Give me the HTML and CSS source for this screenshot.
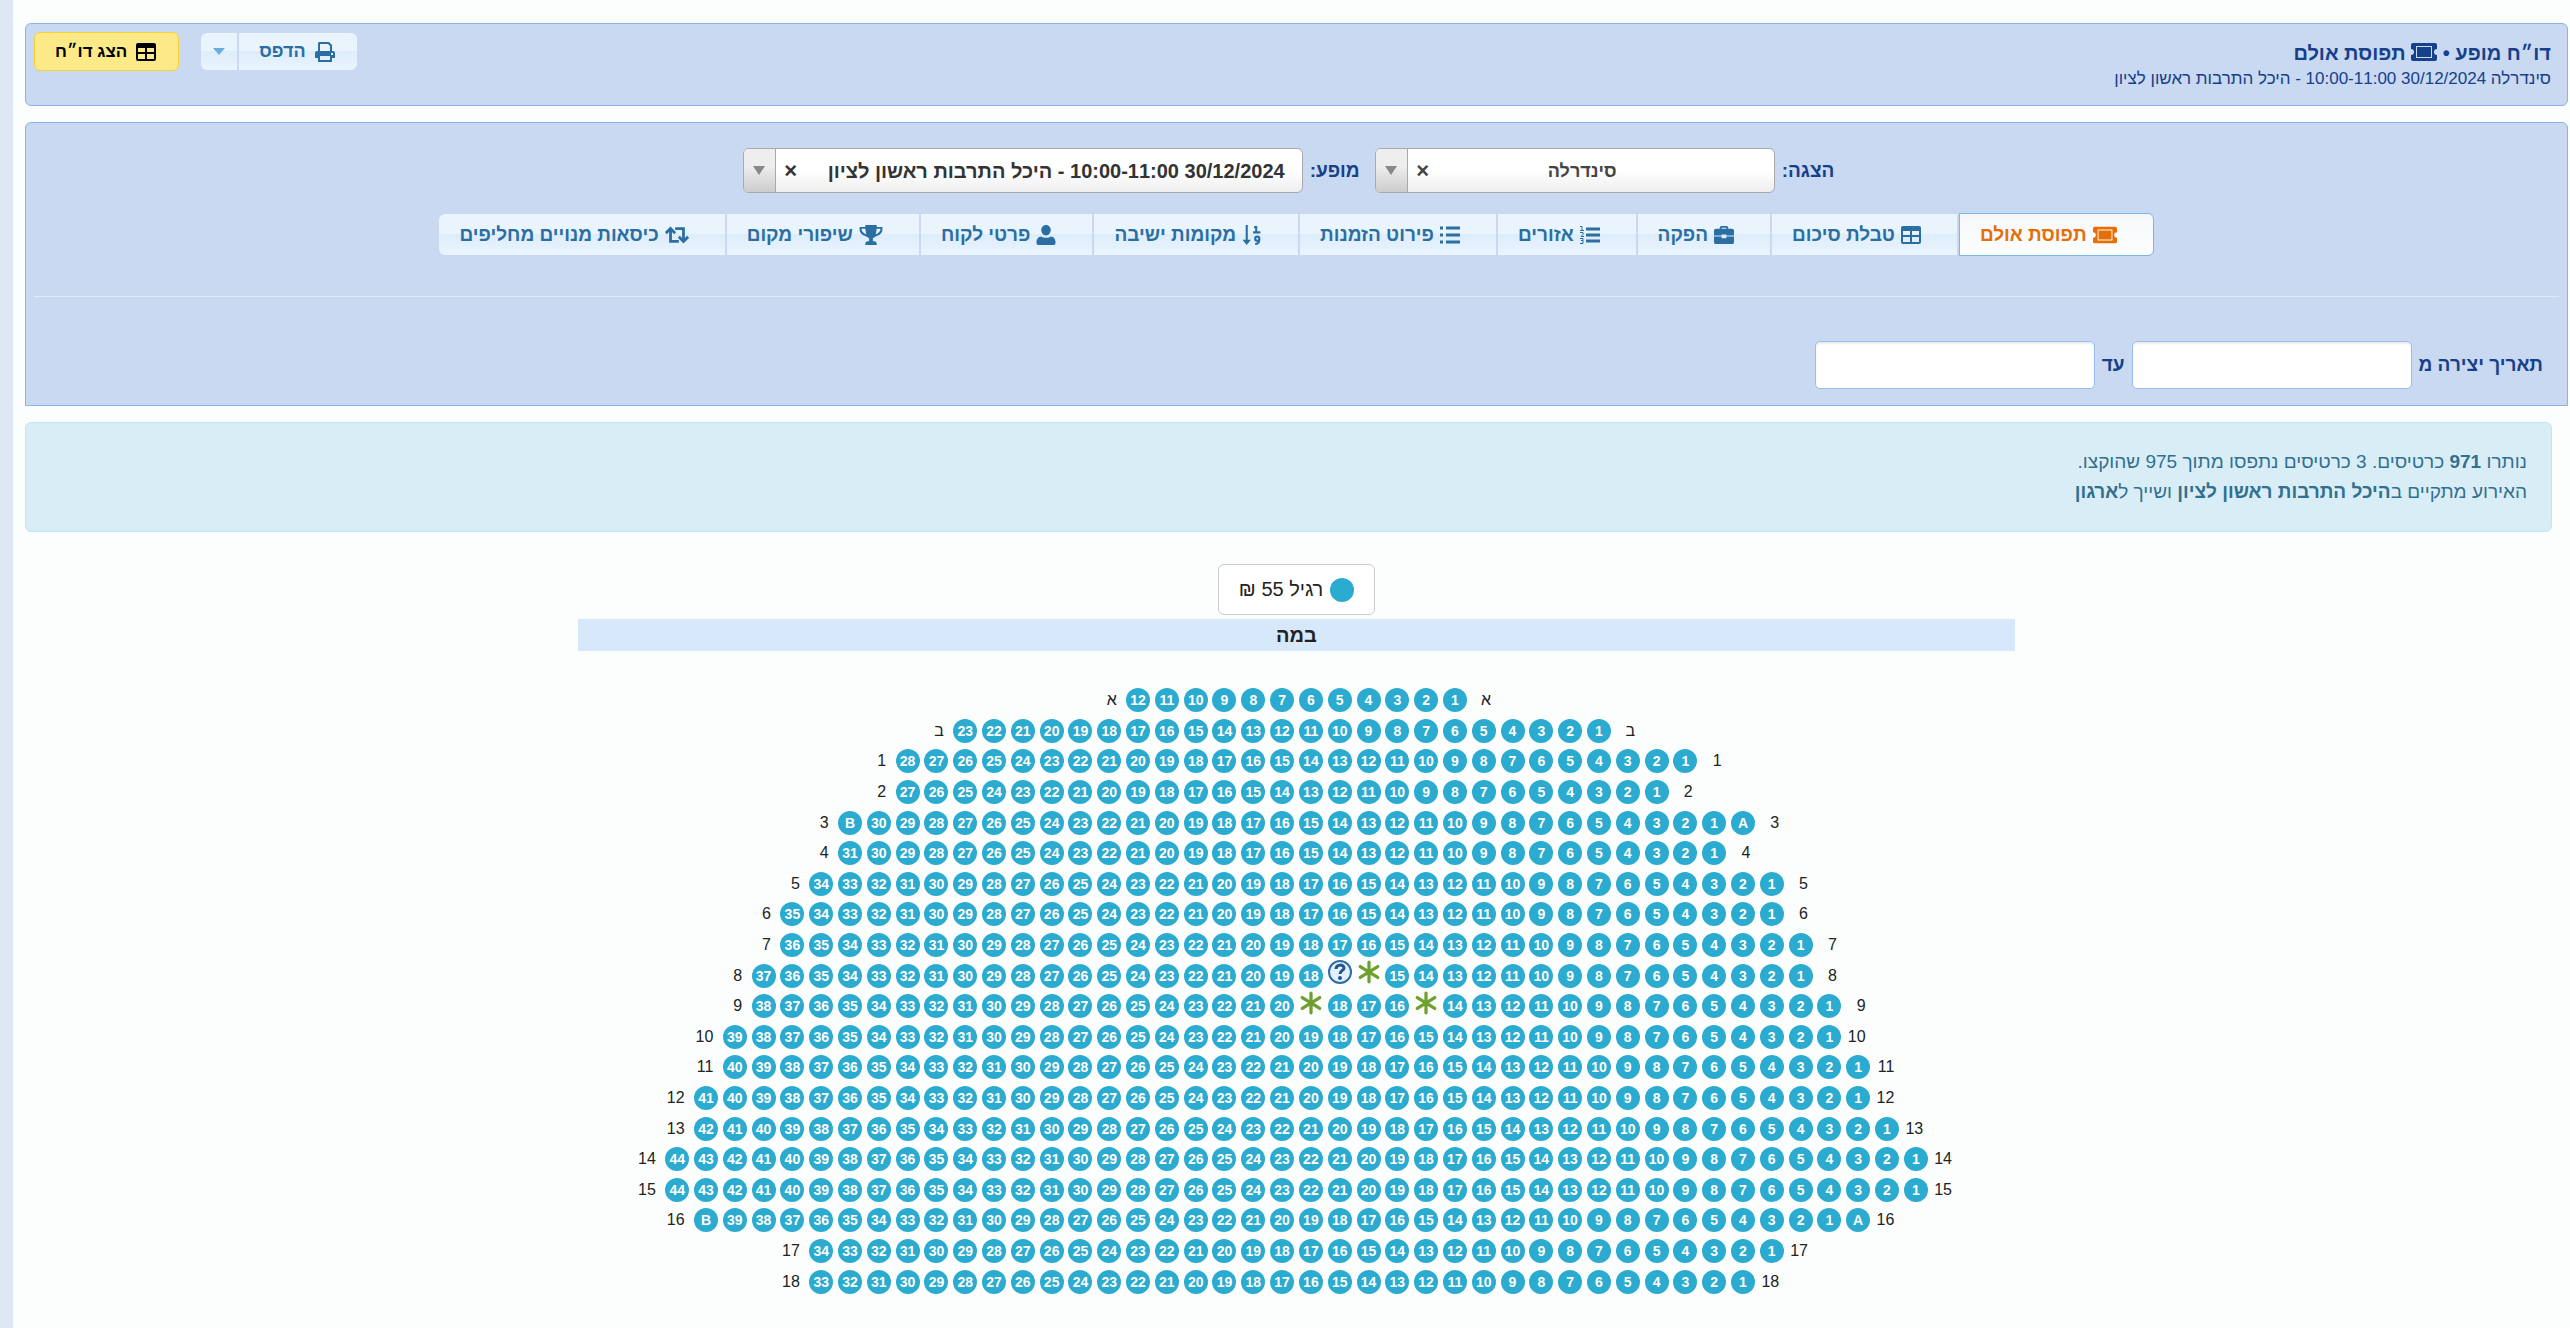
FILE: index.html
```html
<!DOCTYPE html>
<html lang="he" dir="rtl">
<head>
    <meta charset="UTF-8">
    <meta name="viewport" content="width=device-width, initial-scale=1.0">
    <title>דו״ח מופע • תפוסת אולם</title>
    <link rel="stylesheet" href="styles.css">
</head>
<body>
    <!-- Icon sprite -->
    <svg class="sprite" aria-hidden="true">
        <symbol id="i-ticket" viewBox="0 0 26 18">
            <path fill="currentColor" fill-rule="evenodd" d="M2 0h22a2 2 0 0 1 2 2v4a3 3 0 0 0 0 6v4a2 2 0 0 1-2 2H2a2 2 0 0 1-2-2v-4a3 3 0 0 0 0-6V2a2 2 0 0 1 2-2zM5 3v12h16V3zM6 4h14v10H6z"/>
        </symbol>
        <symbol id="i-table" viewBox="0 0 20 18">
            <path fill="currentColor" fill-rule="evenodd" d="M2 0h16a2 2 0 0 1 2 2v14a2 2 0 0 1-2 2H2a2 2 0 0 1-2-2V2a2 2 0 0 1 2-2zM2 5h7v4H2zM11 5h7v4h-7zM2 11h7v5H2zM11 11h7v5h-7z"/>
        </symbol>
        <symbol id="i-print" viewBox="0 0 20 20">
            <path fill="currentColor" fill-rule="evenodd" d="M4 0h10l3 3v6h1a2 2 0 0 1 2 2v5h-3v4H3v-4H0v-5a2 2 0 0 1 2-2h1V1zM5 2v7h10V4l-2-2zM5 14v4h10v-4zM16 11v2h2v-2z"/>
        </symbol>
        <symbol id="i-case" viewBox="0 0 21 19">
            <path fill="currentColor" fill-rule="evenodd" d="M6 3V2a2 2 0 0 1 2-2h5a2 2 0 0 1 2 2v1h4a2 2 0 0 1 2 2v5h-8V9H8v1H0V5a2 2 0 0 1 2-2zM8 3h5V2H8zM0 11h8v2h5v-2h8v6a2 2 0 0 1-2 2H2a2 2 0 0 1-2-2z"/>
        </symbol>
        <symbol id="i-list" viewBox="0 0 20 17">
            <path fill="currentColor" d="M0 0h3v3H0zM6 0h14v3H6zM0 7h3v3H0zM6 7h14v3H6zM0 14h3v3H0zM6 14h14v3H6z"/>
        </symbol>
        <symbol id="i-listnum" viewBox="0 0 20 19">
            <path fill="currentColor" d="M6 2h14v3H6zM6 8h14v3H6zM6 14h14v3H6z"/>
            <path fill="none" stroke="currentColor" d="M0 1h2v4M0 5h4M0 7h3v2L1 11h3M0 13h3v5H0M1 15h2"/>
        </symbol>
        <symbol id="i-sort" viewBox="0 0 18 19">
            <path fill="currentColor" d="M3 0h2v14h3l-4 5-4-5h3z"/>
            <path fill="none" stroke="currentColor" stroke-width="2" d="M11 2h2v5M10 7h7M14 11a2 2 0 1 0 0 4 2 2 0 1 0 0-4M16 13c0 3-1 5-4 5"/>
        </symbol>
        <symbol id="i-user" viewBox="0 0 20 21">
            <path fill="currentColor" d="M10 0a5 5 0 0 1 5 5c0 3-2 6-5 6S5 8 5 5a5 5 0 0 1 5-5zM5 12c3 2 7 2 10 0 3 0 5 3 5 6v1a2 2 0 0 1-2 2H2a2 2 0 0 1-2-2v-1c0-3 2-6 5-6z"/>
        </symbol>
        <symbol id="i-trophy" viewBox="0 0 24 21">
            <path fill="currentColor" fill-rule="evenodd" d="M6 0h12v2h6v3c0 4-4 6-7 7l-3 2v3h2a3 3 0 0 1 2 3v1H6v-1a3 3 0 0 1 2-3h2v-3l-3-2C4 11 0 9 0 5V2h6zM2 4c0 3 2 4 5 6L6 4zM22 4h-4l-1 6c3-2 5-3 5-6z"/>
        </symbol>
        <symbol id="i-retweet" viewBox="0 0 26 20">
            <path fill="none" stroke="currentColor" stroke-width="3" d="M15 17H6V4M11 3h9v13"/>
            <path fill="none" stroke="currentColor" stroke-width="3" d="M1 8l5-5 5 5M15 12l5 5 5-5"/>
        </symbol>
        <symbol id="i-star" viewBox="0 0 20 22">
            <path fill="none" stroke="#6fa02f" stroke-width="3" stroke-linecap="round" d="M10 2v18M2 6l16 10M18 6L2 16"/>
        </symbol>
        <symbol id="i-help" viewBox="0 0 24 24">
            <circle cx="12" cy="12" r="11" fill="#e3f0fc" stroke="#2f6ba6" stroke-width="2"/>
            <path fill="none" stroke="#22568f" stroke-width="3" d="M8 9c0-5 8-5 8-1 0 3-4 2-4 6"/>
            <circle cx="12" cy="18" r="2" fill="#22568f"/>
        </symbol>
    </svg>

    <header class="panel page-head">
        <div class="titles">
            <h1>דו״ח מופע • <svg class="icon-title"><use href="#i-ticket"/></svg> תפוסת אולם</h1>
            <p>סינדרלה 30/12/2024 10:00-11:00 - היכל התרבות ראשון לציון</p>
        </div>
        <div class="actions">
            <div class="btn-group">
                <button type="button" class="btn btn-print"><svg class="icon"><use href="#i-print"/></svg>הדפס</button>
                <button type="button" class="btn btn-caret" aria-label="אפשרויות הדפסה"><span class="caret"></span></button>
            </div>
            <button type="button" class="btn-show"><svg class="icon"><use href="#i-table"/></svg>הצג דו״ח</button>
        </div>
    </header>

    <section class="panel filters">
        <div class="pickers">
            <label for="show">הצגה:</label>
            <div class="combo combo-show">
                <select id="show"><option>סינדרלה</option></select>
                <button type="button" class="clear" aria-label="נקה">×</button>
                <span class="combo-arrow"><span class="caret"></span></span>
            </div>
            <label class="label-event" for="event">מופע:</label>
            <div class="combo combo-event">
                <select id="event"><option>30/12/2024 10:00-11:00 - היכל התרבות ראשון לציון</option></select>
                <button type="button" class="clear" aria-label="נקה">×</button>
                <span class="combo-arrow"><span class="caret"></span></span>
            </div>
        </div>

        <nav class="tabs">
            <a href="#" class="active"><svg class="icon-wide"><use href="#i-ticket"/></svg>תפוסת אולם</a>
            <a href="#"><svg class="icon"><use href="#i-table"/></svg>טבלת סיכום</a>
            <a href="#"><svg class="icon"><use href="#i-case"/></svg>הפקה</a>
            <a href="#"><svg class="icon"><use href="#i-listnum"/></svg>אזורים</a>
            <a href="#"><svg class="icon"><use href="#i-list"/></svg>פירוט הזמנות</a>
            <a href="#"><svg class="icon"><use href="#i-sort"/></svg>מקומות ישיבה</a>
            <a href="#"><svg class="icon"><use href="#i-user"/></svg>פרטי לקוח</a>
            <a href="#"><svg class="icon-wide"><use href="#i-trophy"/></svg>שיפורי מקום</a>
            <a href="#"><svg class="icon-wide"><use href="#i-retweet"/></svg>כיסאות מנויים מחליפים</a>
        </nav>

        <hr>

        <div class="dates">
            <label for="from">תאריך יצירה מ</label>
            <input type="text" id="from">
            <label for="to">עד</label>
            <input type="text" id="to">
        </div>
    </section>

    <div class="alert">
        <p>נותרו <strong>971</strong> כרטיסים. 3 כרטיסים נתפסו מתוך 975 שהוקצו.</p>
        <p>האירוע מתקיים ב<strong>היכל התרבות ראשון לציון</strong> ושייך ל<strong>ארגון</strong></p>
    </div>

    <main class="hall">
        <div class="legend"><span class="dot"></span>רגיל 55 ₪</div>
        <h2 class="stage">במה</h2>
        <div class="seats" id="seats" dir="ltr"></div>
    </main>

    <script src="script.js"></script>
</body>
</html>
```
FILE: styles.css
```css
* {
    margin: 0;
    padding: 0;
    box-sizing: border-box;
}

body {
    font-family: "Liberation Sans", Arial, sans-serif;
    font-size: 20px;
    background: #fcfefe;
    color: #222;
    min-height: 100vh;
    border-left: 13px solid #dfe7f7;
    padding: 23px 2px 20px 12px;
}

button,
input,
select {
    font: inherit;
    color: inherit;
}

.sprite {
    display: none;
}

.icon {
    width: 20px;
    height: 20px;
    flex: none;
}

.icon-wide {
    width: 24px;
    height: 20px;
    flex: none;
}

.panel {
    background: #c8d9f1;
    border: 1px solid #8fb1e4;
    border-radius: 6px;
    color: #17408b;
    margin-bottom: 16px;
}

/* Header */
.page-head {
    display: flex;
    justify-content: space-between;
    align-items: flex-start;
    min-height: 83px;
    padding: 8px 16px 8px 8px;
}

.titles {
    padding-top: 8px;
}

.titles h1 {
    font-size: 20px;
    line-height: 26px;
}

.titles p {
    font-size: 17px;
    line-height: 26px;
}

.icon-title {
    width: 26px;
    height: 18px;
    vertical-align: -1px;
}

.actions {
    display: flex;
    align-items: center;
    gap: 22px;
}

.btn-group {
    display: flex;
    gap: 2px;
}

.btn,
.btn-show {
    display: flex;
    align-items: center;
    gap: 9px;
    font-weight: bold;
    cursor: pointer;
}

.btn {
    height: 37px;
    border: none;
    font-size: 18px;
    color: #2a6ea3;
    background: linear-gradient(#eaf4fd 50%, #ddedfb 50%, #eaf5fe);
}

.btn-print {
    padding: 0 22px 0 20px;
    border-radius: 0 6px 6px 0;
}

.btn-caret {
    padding: 0 12px;
    border-radius: 6px 0 0 6px;
}

.btn-show {
    height: 39px;
    padding: 0 22px 0 20px;
    border: 1px solid #f8cf3a;
    border-radius: 6px;
    font-size: 17px;
    background: #fcea88;
    color: #000;
}

.caret {
    border: 6px solid transparent;
    border-top: 7px solid #6aaddd;
    border-bottom: none;
}

/* Filters */
.filters {
    border-radius: 6px 6px 0 0;
    padding: 25px 8px 16px;
}

.pickers {
    display: flex;
    justify-content: center;
    align-items: center;
    gap: 7px;
    padding-right: 16px;
    margin-bottom: 20px;
}

.pickers label,
.dates label {
    font-size: 19px;
    font-weight: bold;
}

.label-event {
    margin-right: 8px;
}

.combo {
    position: relative;
    display: flex;
    height: 45px;
    border: 1px solid #aaa;
    border-radius: 6px;
    background: linear-gradient(#fff 50%, #eee);
    color: #444;
    overflow: hidden;
}

.combo select {
    flex: 1;
    min-width: 0;
    appearance: none;
    border: none;
    background: none;
    font-size: 18px;
    font-weight: bold;
    padding: 0 17px 0 0;
}

.combo-show {
    width: 400px;
}

.combo-show select {
    text-align-last: center;
}

.combo-event {
    width: 560px;
    color: #333;
}

.combo-event select {
    font-size: 20px;
}

.clear {
    position: absolute;
    left: 38px;
    top: 9px;
    width: 18px;
    border: none;
    background: none;
    font-size: 22px;
    font-weight: bold;
    cursor: pointer;
}

.combo-arrow {
    display: flex;
    align-items: center;
    justify-content: center;
    width: 32px;
    border-right: 1px solid #aaa;
    background: linear-gradient(#eee 40%, #ccc);
}

.combo-arrow .caret {
    border-top: 9px solid #888;
}

.tabs {
    display: flex;
    justify-content: center;
    align-items: center;
    gap: 2px;
}

.tabs a {
    display: flex;
    align-items: center;
    gap: 6px;
    height: 41px;
    padding: 0 36px 0 20px;
    font-size: 19px;
    font-weight: bold;
    color: #2a6ea3;
    text-decoration: none;
    background: linear-gradient(#eaf4fd 50%, #ddedfb 50%, #eaf5fe);
}

.tabs a:last-child {
    border-radius: 6px 0 0 6px;
}

.tabs .active {
    height: 43px;
    color: #e56e05;
    border: 1px solid #79b7e7;
    border-radius: 0 6px 6px 0;
    background: linear-gradient(#f5f8fa, #fdfdfe);
}

.filters hr {
    border: none;
    border-top: 1px solid #dfe9f7;
    margin: 40px 0 44px;
}

.dates {
    display: flex;
    align-items: center;
    gap: 7px;
    padding: 0 16px;
}

.dates input {
    width: 280px;
    height: 48px;
    padding: 0 10px;
    background: #fff;
    border: 1px solid #9dbcec;
    border-radius: 5px;
    box-shadow: inset 0 2px 2px rgba(0, 0, 0, 0.08);
}

/* Summary */
.alert {
    margin-right: 16px;
    padding: 24px;
    font-size: 19px;
    line-height: 30px;
    color: #31708f;
    background: #d9edf7;
    border: 1px solid #bce8f1;
    border-radius: 6px;
}

/* Hall map */
.hall {
    display: flex;
    flex-direction: column;
    align-items: center;
    padding-top: 32px;
}

.legend {
    display: flex;
    align-items: center;
    gap: 7px;
    height: 51px;
    padding: 0 20px;
    margin-bottom: 4px;
    background: #fff;
    border: 1px solid #ccc;
    border-radius: 6px;
}

.dot {
    width: 24px;
    height: 24px;
    border-radius: 50%;
    background: #2aabcf;
}

.stage {
    width: 100%;
    max-width: 1437px;
    margin-bottom: 34px;
    font-size: 20px;
    line-height: 32px;
    text-align: center;
    background: #d7e8fa;
}

.seats {
    display: grid;
    grid-template-columns: repeat(46, 1fr);
    grid-template-rows: repeat(20, 1fr);
    align-items: center;
    justify-items: center;
    width: 100%;
    max-width: 1325px;
    height: 612px;
}

.row-label {
    justify-self: end;
    padding-right: 7px;
    font-size: 16px;
    line-height: 24px;
}

.seat {
    width: 24px;
    height: 24px;
    border: none;
    border-radius: 50%;
    background: #2aabcf;
    color: #fff;
    font-size: 14px;
    font-weight: bold;
    line-height: 22px;
    text-align: center;
    cursor: pointer;
}

.seat-taken {
    align-self: start;
    background: none;
    border-radius: 0;
}

.seat-taken svg {
    display: block;
    width: 24px;
    height: 24px;
}
```
FILE: script.js
```js
// label, column of the rightmost seat, number of seats, extra seats at the ends
const rows = [
    { label: 'א', start: 28, count: 12 },
    { label: 'ב', start: 33, count: 23 },
    { label: '1', start: 36, count: 28 },
    { label: '2', start: 35, count: 27 },
    { label: '3', start: 38, count: 30, extra: true },
    { label: '4', start: 37, count: 31 },
    { label: '5', start: 39, count: 34 },
    { label: '6', start: 39, count: 35 },
    { label: '7', start: 40, count: 36 },
    { label: '8', start: 40, count: 37, taken: { 16: 'star', 17: 'help' } },
    { label: '9', start: 41, count: 38, taken: { 15: 'star', 19: 'star' } },
    { label: '10', start: 41, count: 39 },
    { label: '11', start: 42, count: 40 },
    { label: '12', start: 42, count: 41 },
    { label: '13', start: 43, count: 42 },
    { label: '14', start: 44, count: 44 },
    { label: '15', start: 44, count: 44 },
    { label: '16', start: 42, count: 39, extra: true },
    { label: '17', start: 39, count: 34 },
    { label: '18', start: 38, count: 33 }
];

const seatsEl = document.getElementById('seats');

// The first grid column is kept for the labels
function place(el, row, col) {
    el.style.gridRow = row + 1;
    el.style.gridColumn = col + 1;
    seatsEl.appendChild(el);
}

function addLabel(text, row, col) {
    const label = document.createElement('span');
    label.className = 'row-label';
    label.textContent = text;
    place(label, row, col);
}

rows.forEach((row, index) => {
    const names = [];
    for (let i = 1; i <= row.count; i++) {
        names.push(String(i));
    }
    if (row.extra) {
        names.unshift('A');
        names.push('B');
    }

    addLabel(row.label, index, row.start + 1);

    names.forEach((name, i) => {
        const seat = document.createElement('button');
        const icon = row.taken && row.taken[name];
        seat.type = 'button';
        seat.className = 'seat';
        if (icon) {
            seat.classList.add('seat-taken');
            seat.setAttribute('aria-label', name);
            seat.innerHTML = `<svg><use href="#i-${icon}"/></svg>`;
        } else {
            seat.textContent = name;
        }
        place(seat, index, row.start - i);
    });

    addLabel(row.label, index, row.start - names.length);
});
```
